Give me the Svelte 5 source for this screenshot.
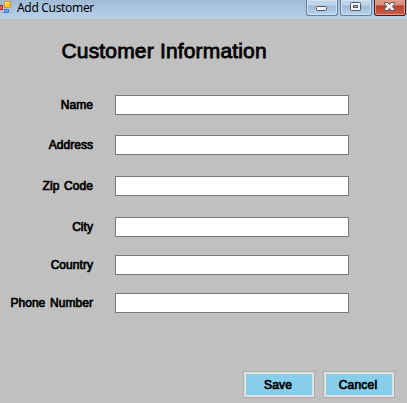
<script>
  const fields = [
    { id: 'name', label: 'Name', gap: 0 },
    { id: 'address', label: 'Address', gap: 20 },
    { id: 'zip', label: 'Zip Code', gap: 21 },
    { id: 'city', label: 'City', gap: 21 },
    { id: 'country', label: 'Country', gap: 18 },
    { id: 'phone', label: 'Phone Number', gap: 18 }
  ];
</script>

<main class="window">
  <header class="titlebar">
    <svg class="app-icon" width="12" height="14" viewBox="0 0 12 14">
      <path d="M1.5 1V12.5H11.5V9M0 3.5H3" fill="none" stroke="#a9b6c4" />
      <rect x="-3.5" y="5.5" width="6" height="4" fill="#e8645a" stroke="#b02a25" />
      <rect x="4.5" y="1.5" width="6" height="6" fill="#ffc926" stroke="#d39a1d" />
      <path d="M5 2.5H9M5.5 3V5" stroke="#fff0a8" />
      <rect x="4.5" y="9.5" width="4" height="3" fill="#6ea6f5" stroke="#4479d6" />
    </svg>
    <span class="caption">Add Customer</span>
    <div class="controls">
      <button class="ctl" aria-label="Minimize">
        <svg width="30" height="15" viewBox="0 0 30 15">
          <rect x="9.5" y="6.5" width="10" height="4" rx="1" fill="#f4f4f4" stroke="#535666" />
        </svg>
      </button>
      <button class="ctl" aria-label="Maximize">
        <svg width="30" height="15" viewBox="0 0 30 15">
          <rect x="9.5" y="2.5" width="10" height="8" rx="1" fill="#f4f4f4" stroke="#535666" />
          <rect x="12.5" y="5.5" width="4" height="2" fill="#a9c6e0" stroke="#535666" />
        </svg>
      </button>
      <button class="ctl close" aria-label="Close">
        <svg width="30" height="15" viewBox="0 0 30 15">
          <path d="M9.5 2.5H12.7L14.5 4.5L16.3 2.5H19.5V4L17.3 6.5L19.5 9V10.5H16.3L14.5 8.5L12.7 10.5H9.5V9L11.7 6.5L9.5 4Z" fill="#f4f4f4" stroke="#535666" />
        </svg>
      </button>
    </div>
  </header>

  <h1>Customer Information</h1>

  <form>
    {#each fields as field}
      <div class="row" style:margin-top="{field.gap}px">
        <label for={field.id}>{field.label}</label>
        <input id={field.id} type="text" />
      </div>
    {/each}
  </form>

  <footer>
    <button class="action">Save</button>
    <button class="action">Cancel</button>
  </footer>
</main>

<style>
  :global(body) {
    margin: 0;
    overflow: hidden;
  }
  .window {
    display: flex;
    flex-direction: column;
    box-sizing: border-box;
    width: 407px;
    height: 403px;
    background: #c0c0c0;
    font-family: "Liberation Sans", Arial, sans-serif;
    color: #000;
  }
  .titlebar {
    display: flex;
    align-items: flex-start;
    height: 19px;
    flex: none;
    background: linear-gradient(#a1bbd7, #b9d1ea);
  }
  .app-icon {
    flex: none;
  }
  .caption {
    margin-left: 5px;
    font: 12px/16px "Noto Sans", "Open Sans", sans-serif;
    letter-spacing: -0.32px;
    white-space: nowrap;
  }
  .controls {
    display: flex;
    gap: 2px;
    margin-left: auto;
    margin-right: 1px;
  }
  .ctl {
    box-sizing: border-box;
    width: 32px;
    height: 16px;
    padding: 0;
    border: 1px solid #657f9b;
    border-top: 0;
    border-radius: 0 0 3px 3px;
    background: linear-gradient(#c0d5e9 0 5px, #9dbad7 6px, #b9d3ec);
    box-shadow: inset 0 0 0 1px #d3e3f1;
  }
  .ctl svg {
    display: block;
  }
  .close {
    border-color: #4c1518;
    background: linear-gradient(#e2a294 0, #d58b7c 5px, #b83b27 6px, #cb6349);
    box-shadow: inset 0 0 0 1px #df9c8b;
  }
  h1 {
    margin: 19px 0 0 61.5px;
    font-size: 21px;
    line-height: 26px;
    font-weight: 400;
    letter-spacing: 0.17px;
    -webkit-text-stroke: 0.8px #000;
    white-space: nowrap;
  }
  form {
    margin-top: 31px;
  }
  .row {
    display: flex;
    align-items: center;
    height: 20px;
  }
  label {
    width: 93px;
    margin-right: 22px;
    text-align: right;
    font-size: 12px;
    font-weight: 400;
    letter-spacing: 0.05px;
    word-spacing: 1.3px;
    -webkit-text-stroke: 0.7px #000;
    white-space: nowrap;
  }
  input {
    box-sizing: border-box;
    width: 234px;
    height: 20px;
    margin: 0;
    padding: 0 3px;
    border: 1px solid #7a7a7a;
    border-radius: 0;
    background: #fff;
    outline: none;
  }
  footer {
    display: flex;
    justify-content: flex-end;
    gap: 8px;
    margin: auto 12px 5px 0;
  }
  .action {
    box-sizing: border-box;
    width: 72px;
    height: 27px;
    padding: 0 2px 0 0;
    border: 1px solid #adadad;
    background: #87ceeb;
    box-shadow: inset 0 0 0 2px #e1e1e1;
    font: 400 12px "Liberation Sans", Arial, sans-serif;
    letter-spacing: 0.2px;
    -webkit-text-stroke: 0.7px #000;
    color: #000;
  }
</style>
